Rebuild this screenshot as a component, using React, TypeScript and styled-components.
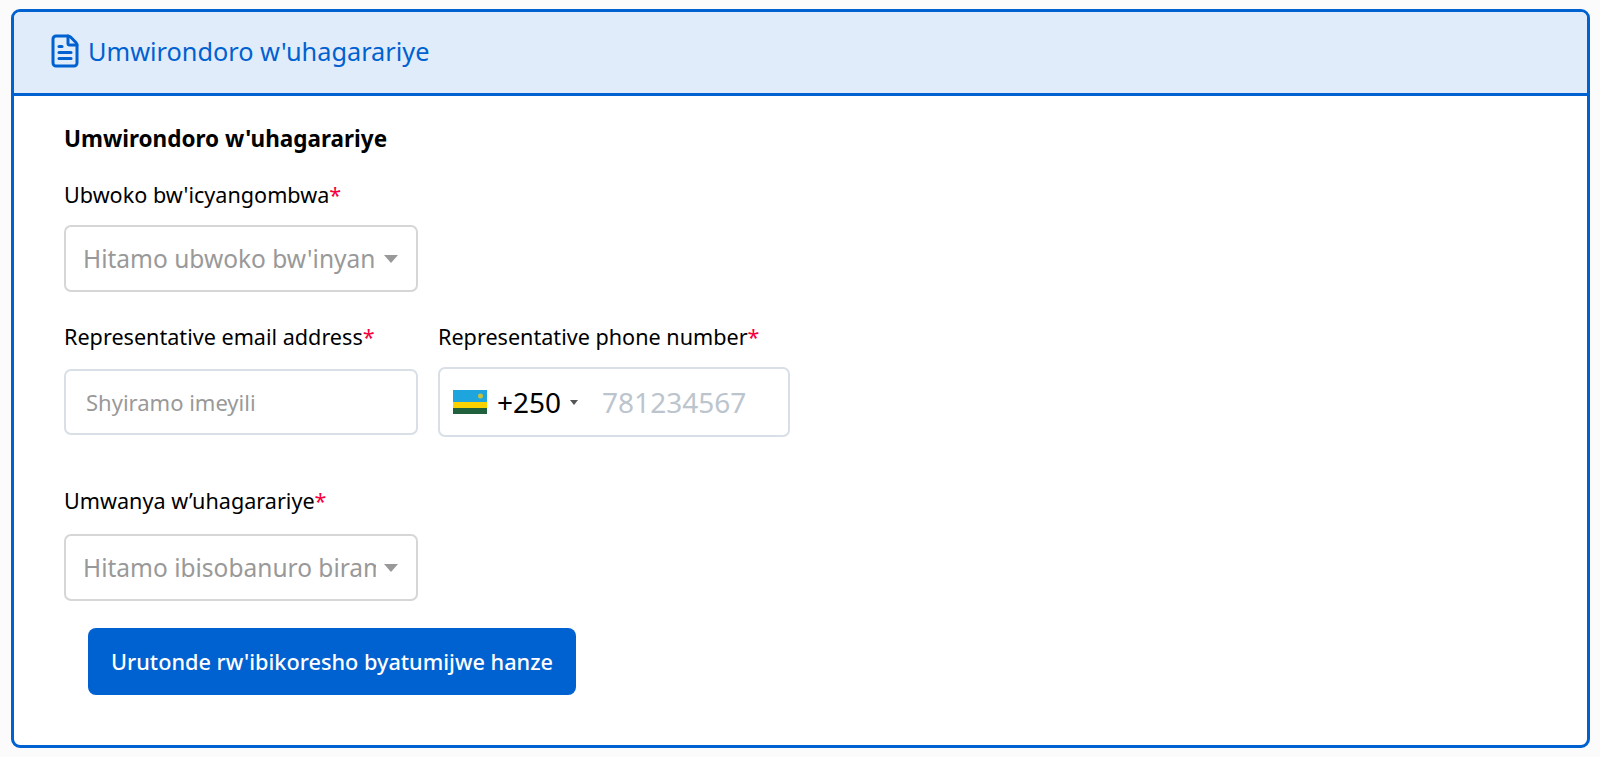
import React from "react";
import styled, { createGlobalStyle } from "styled-components";
import { FileText } from "lucide-react";

const Global = createGlobalStyle`
  html, body { margin: 0; padding: 0; background: #fbfbfb; }
  body { font-family: "Noto Sans", "Open Sans", sans-serif; color: #000; }
`;

const Page = styled.div`
  height: 757px;
  box-sizing: border-box;
  padding: 9px 10px 9px 11px;
  overflow: hidden;
`;

const Card = styled.section`
  height: 739px;
  box-sizing: border-box;
  border: 3px solid #0061d1;
  border-radius: 9px;
  overflow: hidden;
  background: #fff;
`;

const CardHeader = styled.header`
  height: 84px;
  box-sizing: border-box;
  display: flex;
  align-items: center;
  gap: 5px;
  padding: 0 0 3px 33px;
  background: #e0ecf9;
  border-bottom: 3px solid #0061d1;
  color: #0061d1;
  font-size: 25.3px;
  line-height: 32px;
`;

const Body = styled.div`
  padding: 29px 0 0 50px;
`;

const SectionTitle = styled.h2`
  margin: 0;
  font-size: 22.5px;
  line-height: 28px;
  font-weight: 700;
`;

const Field = styled.div<{ $width: number }>`
  width: ${(p) => p.$width}px;
  display: flex;
  flex-direction: column;
`;

const Label = styled.label`
  font-size: 21.6px;
  line-height: 26px;
  white-space: nowrap;
`;

const Star = styled.span`
  color: #f5003d;
`;

const SelectBox = styled.div`
  height: 67px;
  box-sizing: border-box;
  display: flex;
  align-items: center;
  padding: 0 18px 0 17px;
  border: 2px solid #d6d6d6;
  border-radius: 7px;
  color: #999;
  font-size: 24.5px;
`;

const SelectText = styled.span`
  flex: 1;
  min-width: 0;
  overflow: hidden;
  white-space: nowrap;
`;

const Caret = styled.span`
  flex: none;
  width: 0;
  height: 0;
  margin-left: 8px;
  border-left: 7.5px solid transparent;
  border-right: 7.5px solid transparent;
  border-top: 8px solid #999;
`;

const FirstField = styled.div`
  margin-top: 29px;
`;

const SelectSlot = styled.div<{ $gap: number }>`
  margin-top: ${(p) => p.$gap}px;
`;

const Row = styled.div`
  display: flex;
  gap: 20px;
  margin-top: 32px;
`;

const TextInputBox = styled.div`
  height: 66px;
  margin-top: 19px;
  box-sizing: border-box;
  display: flex;
  align-items: center;
  padding-left: 20px;
  border: 2px solid #d9dfe6;
  border-radius: 7px;
  color: #999;
  font-size: 22px;
`;

const PhoneBox = styled.div`
  height: 70px;
  margin-top: 17px;
  box-sizing: border-box;
  display: flex;
  align-items: center;
  padding-left: 13px;
  border: 2px solid #d9dfe6;
  border-radius: 7px;
  font-size: 28px;
`;

const Code = styled.span`
  margin-left: 10px;
  color: #000;
`;

const SmallCaret = styled.span`
  width: 0;
  height: 0;
  margin-left: 9px;
  border-left: 4.5px solid transparent;
  border-right: 4.5px solid transparent;
  border-top: 5px solid #555;
`;

const PhonePlaceholder = styled.span`
  margin-left: 24px;
  color: #bcc5cd;
`;

const PositionField = styled.div`
  margin-top: 51px;
`;

const Button = styled.button`
  display: block;
  width: 488px;
  height: 67px;
  margin: 27px 0 0 24px;
  border: 0;
  border-radius: 8px;
  background: #0061d1;
  color: #fff;
  font-family: inherit;
  font-size: 21.7px;
  font-weight: 500;
`;

const Flag = () => (
  <svg width="34" height="24" viewBox="0 0 34 24" style={{ flex: "none" }}>
    <rect width="34" height="12" fill="#1ea5de" />
    <rect y="12" width="34" height="6" fill="#fad201" />
    <rect y="18" width="34" height="6" fill="#20603d" />
    <circle cx="27.5" cy="6" r="2.5" fill="#c4c23a" />
  </svg>
);

export default function App() {
  return (
    <Page>
      <Global />
      <Card>
        <CardHeader>
          <FileText size={36} strokeWidth={2} />
          <span>Umwirondoro w'uhagarariye</span>
        </CardHeader>
        <Body>
          <SectionTitle>Umwirondoro w'uhagarariye</SectionTitle>
          <FirstField>
            <Field $width={354}>
              <Label>
                Ubwoko bw'icyangombwa<Star>*</Star>
              </Label>
              <SelectSlot $gap={17}>
                <SelectBox>
                  <SelectText>Hitamo ubwoko bw'inyandiko</SelectText>
                  <Caret />
                </SelectBox>
              </SelectSlot>
            </Field>
          </FirstField>
          <Row>
            <Field $width={354}>
              <Label>
                Representative email address<Star>*</Star>
              </Label>
              <TextInputBox>Shyiramo imeyili</TextInputBox>
            </Field>
            <Field $width={352}>
              <Label>
                Representative phone number<Star>*</Star>
              </Label>
              <PhoneBox>
                <Flag />
                <Code>+250</Code>
                <SmallCaret />
                <PhonePlaceholder>781234567</PhonePlaceholder>
              </PhoneBox>
            </Field>
          </Row>
          <PositionField>
            <Field $width={354}>
              <Label>
                Umwanya w’uhagarariye<Star>*</Star>
              </Label>
              <SelectSlot $gap={20}>
                <SelectBox>
                  <SelectText>Hitamo ibisobanuro birambuye</SelectText>
                  <Caret />
                </SelectBox>
              </SelectSlot>
            </Field>
          </PositionField>
          <Button>Urutonde rw'ibikoresho byatumijwe hanze</Button>
        </Body>
      </Card>
    </Page>
  );
}
